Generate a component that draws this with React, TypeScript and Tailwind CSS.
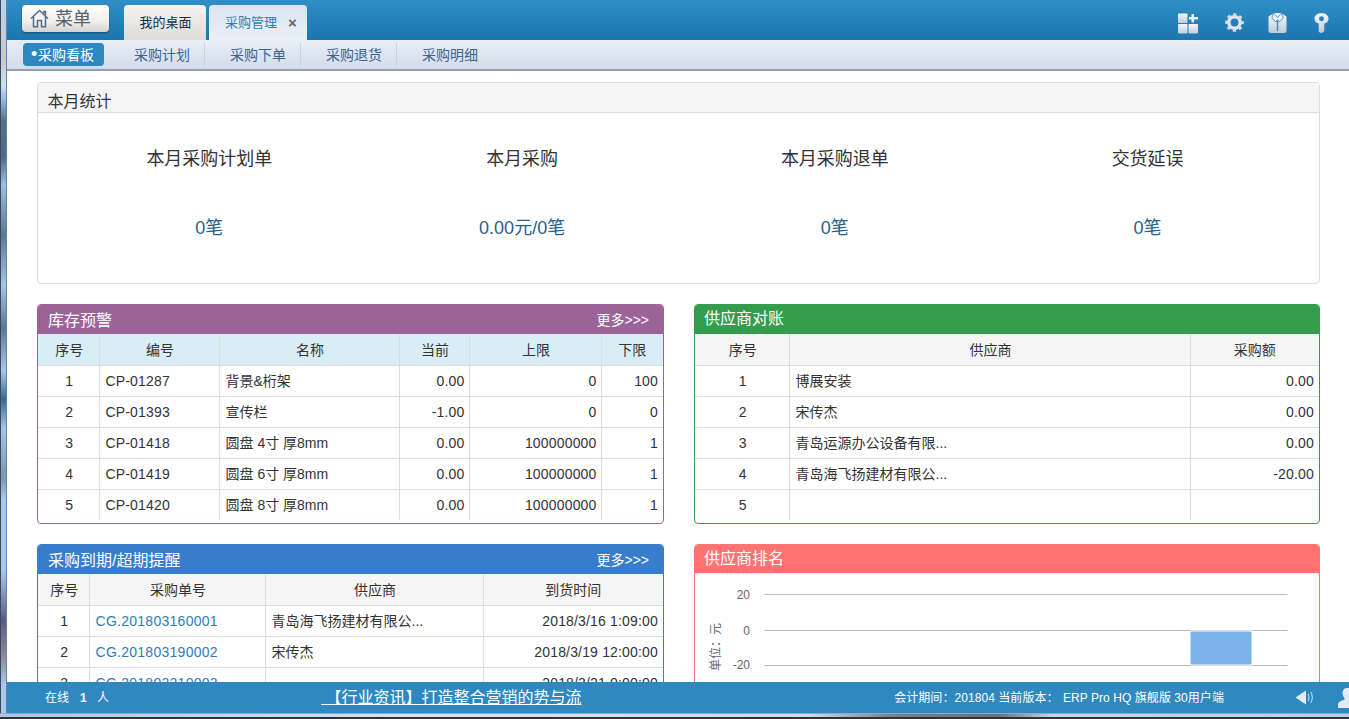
import React from "react";

const CJK = '"Liberation Sans","Noto Sans CJK SC",sans-serif';

function Cell({ children, align = "left", last = false, lastRow = false, cls = "" }: any) {
  const a = align === "center" ? "text-center" : align === "right" ? "text-right" : "text-left";
  return (
    <td
      className={`h-[31px] p-0 text-[14px] leading-[20px] whitespace-nowrap overflow-hidden border-[#ddd] text-[#333] ${a} ${last ? "px-[5px]" : "border-r pl-[6px] pr-[4px]"} ${lastRow ? "" : "border-b"} ${cls}`}
    >
      {children}
    </td>
  );
}

function DataTable({ widths, head, rows, aligns, headBg, linkCol }: { widths: number[]; head: string[]; rows: string[][]; aligns: string[]; headBg: string; linkCol?: number }) {
  return (
    <table className="table-fixed border-collapse w-full">
      <colgroup>
        {widths.map((w, i) => (
          <col key={i} style={{ width: w }} />
        ))}
      </colgroup>
      <thead>
        <tr className={headBg}>
          {head.map((h, i) => (
            <Cell key={i} align="center" last={i === head.length - 1} cls="pt-[2px]">
              {h}
            </Cell>
          ))}
        </tr>
      </thead>
      <tbody>
        {rows.map((r, ri) => (
          <tr key={ri}>
            {r.map((c, i) => (
              <Cell
                key={i}
                align={aligns[i]}
                last={i === r.length - 1}
                lastRow={ri === rows.length - 1}
                cls={`${linkCol === i ? "text-[#337ab7]! tracking-[0.27px]" : ""} ${/^[\d/: .A-Z-]+$/.test(c) && linkCol !== i ? "tracking-[0.17px]" : ""}`}
              >
                {c}
              </Cell>
            ))}
          </tr>
        ))}
      </tbody>
    </table>
  );
}

function PanelHead({ title, bg, more }: { title: string; bg: string; more?: boolean }) {
  return (
    <div className={`h-[29px] flex items-center justify-between pl-[10px] pr-[14px] text-white ${bg}`}>
      <span className="text-[16px] leading-[30px] pt-[2px]">{title}</span>
      {more && <span className="text-[14px] pt-[2px]">更多&gt;&gt;&gt;</span>}
    </div>
  );
}

function HomeIcon() {
  return (
    <svg width="19" height="19" viewBox="0 0 19 19" fill="none" stroke="#4f6d88" strokeWidth="1.5" strokeLinejoin="round" className="shrink-0">
      <path d="M1 9.500 9.500 1.500 18 9.500" />
      <path d="M3.500 7.500V17.800H7.500V11.500H11.500V17.800H15.500V7.500" />
      <path d="M13.800 4.500V2.500H15.500V6" />
    </svg>
  );
}

function TopIcons() {
  return (
    <div className="flex items-start pt-[12px] pr-[20px]">
      <svg width="20" height="21" viewBox="0 0 20 21" className="mt-[1px]">
        <defs>
          <linearGradient id="g1" x1="0" y1="0" x2="0" y2="1">
            <stop offset="0" stopColor="#f5f7fa" />
            <stop offset="1" stopColor="#c0ccd9" />
          </linearGradient>
        </defs>
        <rect x="0" y="0.500" width="9.500" height="9.500" rx="0.8" fill="url(#g1)" />
        <rect x="0" y="11" width="9.500" height="9.500" rx="0.8" fill="url(#g1)" />
        <rect x="10.500" y="11" width="9.500" height="9.500" rx="0.8" fill="url(#g1)" />
        <path d="M13.500 1h2.500v3h4v2.500h-4v3h-2.500v-3h-2.500V4h2.500z" fill="#eef2f7" />
      </svg>
      <svg width="19" height="19" viewBox="0 0 20 20" fill="none" className="ml-[27px] mt-[1px]">
        <circle cx="10" cy="10" r="6" stroke="#dfe6ee" strokeWidth="3.600" />
        <circle cx="10" cy="10" r="8.300" stroke="#d5dee8" strokeWidth="3" strokeDasharray="3.300 3.220" strokeDashoffset="1.650" />
      </svg>
      <svg width="19" height="21" viewBox="0 0 19 21" className="ml-[24px]">
        <path d="M0.500 4.500 6 1H13L18.500 4.500V18.500A2.500 2.500 0 0 1 16 21H3A2.500 2.500 0 0 1 0.500 18.500z" fill="url(#g1)" />
        <path d="M5.500 1 3.800 6 8 10 9.500 7.500 11 10 15.200 6 13.500 1 9.500 5.500z" fill="#f2f5f8" stroke="#2f7fb3" strokeWidth="0.8" strokeLinejoin="round" />
        <path d="M9.500 8.500V19" stroke="#3f86b6" strokeWidth="1.400" />
      </svg>
      <svg width="15" height="22" viewBox="0 0 16 22" className="ml-[27px]">
        <path
          fillRule="evenodd"
          d="M8 0.500C12.500 0.500 15.500 2.500 15.500 6.500 15.500 9.500 13.500 11 11 11.500V19.500L9 21.500H6.500L5 20V11.500C2.500 11 0.500 9.500 0.500 6.500 0.500 2.500 3.500 0.500 8 0.500zM8 3.800a2.600 2.600 0 1 0 0 5.200 2.600 2.600 0 0 0 0-5.200z"
          fill="url(#g1)"
        />
      </svg>
    </div>
  );
}

function Chart() {
  return (
    <svg width="624" height="140" viewBox="0 0 624 140" className="block">
      <g stroke="#bbb" strokeWidth="1">
        <path d="M69.500 20.500H592.500" />
        <path d="M69.500 56.500H592.500" />
        <path d="M69.500 91.500H592.500" />
      </g>
      <rect x="495" y="57" width="62" height="34" fill="#7cb2ea" stroke="#fff" strokeWidth="1" />
      <g fill="#666" fontSize="12" textAnchor="end" fontFamily={CJK}>
        <text x="55" y="25">20</text>
        <text x="55" y="61">0</text>
        <text x="55" y="95">-20</text>
      </g>
      <text transform="translate(25 73) rotate(-90)" fill="#666" fontSize="12" textAnchor="middle" fontFamily={CJK}>
        单位：元
      </text>
    </svg>
  );
}

export default function App() {
  return (
    <div className="h-[719px] w-[1349px] overflow-hidden flex flex-col bg-white" style={{ fontFamily: CJK }}>
      <div className="flex h-[713px]">
        <div className="w-[7px] shrink-0 border-l border-[#3a4a5a] border-r-[#5d85ad] border-r bg-[linear-gradient(to_bottom,#b9d2ee_0%,#c9c9c9_8%,#cfdff2_12%,#90b8e4_14%,#566f88_17%,#4f6a85_22%,#9dbfe6_26%,#5d7890_33%,#a5c6ea_40%,#5d7890_46%,#a8c8ec_52%,#2f6a94_56%,#a5c6ea_60%,#7d95ad_67%,#a8c8ec_70%,#a8c8ec_80%,#5c5a85_87%,#8a8a99_92%,#a8c8ec_96%,#a8c8ec_100%)]" />
        <div className="flex-1 flex flex-col min-w-0">
          <header className="h-[40px] shrink-0 flex justify-between bg-[linear-gradient(to_bottom,#2f8fc6,#1c75ae)]">
            <div className="flex items-end">
              <button className="ml-[15px] mb-[8px] w-[87px] h-[27px] rounded-[4px] flex items-center justify-start pl-[8px] gap-[6px] text-[18px] text-[#56636f] bg-[linear-gradient(to_bottom,#ffffff,#f2efec_60%,#d5d2cf)] shadow-[0_1px_2px_rgba(0,0,0,0.4)]">
                <HomeIcon />
                <span className="leading-none">菜单</span>
              </button>
              <div className="ml-[15px] h-[35px] w-[82px] rounded-t-[4px] flex items-center justify-center pl-[1px] text-[13px] text-[#1b2f45] bg-[linear-gradient(to_bottom,#f5f4f3,#dcdbda)]">
                我的桌面
              </div>
              <div className="ml-[3px] h-[35px] w-[98px] rounded-t-[4px] flex items-center pl-[16px] gap-[11px] text-[13px] text-[#2b7fb5] bg-[linear-gradient(to_bottom,#dbe5f1,#e9f0f8)]">
                <span>采购管理</span>
                <span className="text-[15px] font-bold leading-none text-[#666]">×</span>
              </div>
            </div>
            <TopIcons />
          </header>

          <nav className="h-[31px] shrink-0 flex items-start bg-[linear-gradient(to_bottom,#e8eef6,#d3dce8)] border-b-2 border-[#8f9fb5] pt-[3px] text-[14px]">
            <div className="ml-[16px] w-[81px] h-[23px] rounded-[4px] bg-[#2d88bf] text-white leading-[24px] pl-[8px] whitespace-nowrap flex">
              <span className="w-[7px] text-[18px] leading-[23px]">•</span>
              <span>采购看板</span>
            </div>
            <div className="ml-[5px] flex">
              {["采购计划", "采购下单", "采购退货", "采购明细"].map((t, i) => (
                <div key={t} className={`w-[96px] h-[23px] leading-[25px] pl-[25px] text-[#3a6490] ${i < 3 ? "border-r border-[#c6d2e0]" : ""}`}>
                  {t}
                </div>
              ))}
            </div>
          </nav>

          <main className="flex-1 min-h-0 overflow-hidden pt-[11px] pl-[30px]">
            <section className="w-[1283px] h-[202px] rounded-[4px] border border-[#ddd]">
              <div className="h-[30px] bg-[#f5f5f5] border-b border-[#ddd] pl-[9.500px] text-[16px] leading-[37px] text-[#333] rounded-t-[4px]">本月统计</div>
              <div className="grid grid-cols-4 px-[15px] text-center text-[18px]">
                {[
                  ["本月采购计划单", "0笔"],
                  ["本月采购", "0.00元/0笔"],
                  ["本月采购退单", "0笔"],
                  ["交货延误", "0笔"],
                ].map(([a, b]) => (
                  <div key={a} className="flex flex-col items-center">
                    <div className="mt-[34px] leading-[24px] text-[#333]">{a}</div>
                    <div className="mt-[45px] leading-[24px] text-[#2a5f8a]">{b}</div>
                  </div>
                ))}
              </div>
            </section>

            <div className="mt-[20px] grid grid-cols-[627px_626px] gap-x-[30px] gap-y-[20px] w-[1283px]">
              <section className="h-[220px] rounded-[4px] border border-[#9c6399] overflow-hidden">
                <PanelHead title="库存预警" bg="bg-[#9c6399]" more />
                <DataTable
                  widths={[61, 120, 180, 70, 132, 62]}
                  headBg="bg-[#d9edf7]"
                  head={["序号", "编号", "名称", "当前", "上限", "下限"]}
                  aligns={["center", "left", "left", "right", "right", "right"]}
                  rows={[
                    ["1", "CP-01287", "背景&桁架", "0.00", "0", "100"],
                    ["2", "CP-01393", "宣传栏", "-1.00", "0", "0"],
                    ["3", "CP-01418", "圆盘 4寸 厚8mm", "0.00", "100000000", "1"],
                    ["4", "CP-01419", "圆盘 6寸 厚8mm", "0.00", "100000000", "1"],
                    ["5", "CP-01420", "圆盘 8寸 厚8mm", "0.00", "100000000", "1"],
                  ]}
                />
              </section>

              <section className="h-[220px] rounded-[4px] border border-[#339c4d] overflow-hidden">
                <div className="h-[29px] flex items-center pl-[9px] pb-[1px] text-white text-[16px] bg-[#339c4d]">供应商对账</div>
                <DataTable
                  widths={[94, 401, 129]}
                  headBg="bg-[#f5f5f5]"
                  head={["序号", "供应商", "采购额"]}
                  aligns={["center", "left", "right"]}
                  rows={[
                    ["1", "博展安装", "0.00"],
                    ["2", "宋传杰", "0.00"],
                    ["3", "青岛运源办公设备有限...", "0.00"],
                    ["4", "青岛海飞扬建材有限公...", "-20.00"],
                    ["5", "", ""],
                  ]}
                />
              </section>

              <section className="rounded-t-[4px] border border-[#377dcc] h-[300px] overflow-hidden">
                <PanelHead title="采购到期/超期提醒" bg="bg-[#377dcc]" more />
                <DataTable
                  widths={[51, 176, 218, 180]}
                  headBg="bg-[#f5f5f5]"
                  linkCol={1}
                  head={["序号", "采购单号", "供应商", "到货时间"]}
                  aligns={["center", "left", "left", "right"]}
                  rows={[
                    ["1", "CG.201803160001", "青岛海飞扬建材有限公...", "2018/3/16 1:09:00"],
                    ["2", "CG.201803190002", "宋传杰", "2018/3/19 12:00:00"],
                    ["3", "CG.201803210003", "", "2018/3/21 0:00:00"],
                  ]}
                />
              </section>

              <section className="rounded-t-[4px] border border-[#ff7373] h-[300px] overflow-hidden">
                <div className="h-[29px] flex items-center pl-[9px] text-white text-[16px] bg-[#ff7373] border-b border-[#eee]">供应商排名</div>
                <Chart />
              </section>
            </div>
          </main>

          <footer className="h-[31px] shrink-0 bg-[#2f88c0] flex items-center text-white text-[12px]">
            <div className="ml-[38px] w-[276px] flex">
              <span>在线</span>
              <b className="ml-[11px] w-[7px]">1</b>
              <span className="ml-[10px]">人</span>
            </div>
            <a className="text-[16px] underline whitespace-pre">&nbsp;【行业资讯】打造整合营销的势与流</a>
            <div className="ml-auto whitespace-pre tracking-[0.06px]">
              会计期间：201804 当前版本：<span className="ml-[1px]"> ERP Pro HQ 旗舰版 30用户端</span>
            </div>
            <div className="w-[125px] h-full flex items-center pl-[71px] gap-[24px] shrink-0 overflow-hidden">
              <svg width="19" height="17" viewBox="0 0 19 17" className="shrink-0">
                <path d="M0.500 8.500 11 1.500V15.500z" fill="#e4ebf3" />
                <rect x="6" y="4.500" width="5" height="8" fill="#e4ebf3" />
                <path d="M13 5c1.300 2 1.300 5 0 7M15.500 3c2.300 3 2.300 8 0 11" stroke="#dfe7f0" fill="none" strokeWidth="1" />
              </svg>
              <svg width="18" height="20" viewBox="0 0 18 20" className="shrink-0">
                <path d="M9 0c3 0 4.500 2 4.500 5 0 2-1 4-2 5v1.500c2 1 6.500 2 6.500 5V20H0v-3.500c0-3 4.500-4 6.500-5V10c-1-1-2-3-2-5C4.500 2 6 0 9 0z" fill="#e4ebf3" />
              </svg>
            </div>
          </footer>
        </div>
      </div>
      <div className="h-[6px] shrink-0 bg-[linear-gradient(to_right,#a8c6ea,#d5e3f3_30%,#cfdcea_60%,#7a7f88_66%,#6a6f78_74%,#c5d5e8_78%,#b8cde6)] border-b-2 border-[#333] border-t border-t-[#8aa9cc]" />
    </div>
  );
}
